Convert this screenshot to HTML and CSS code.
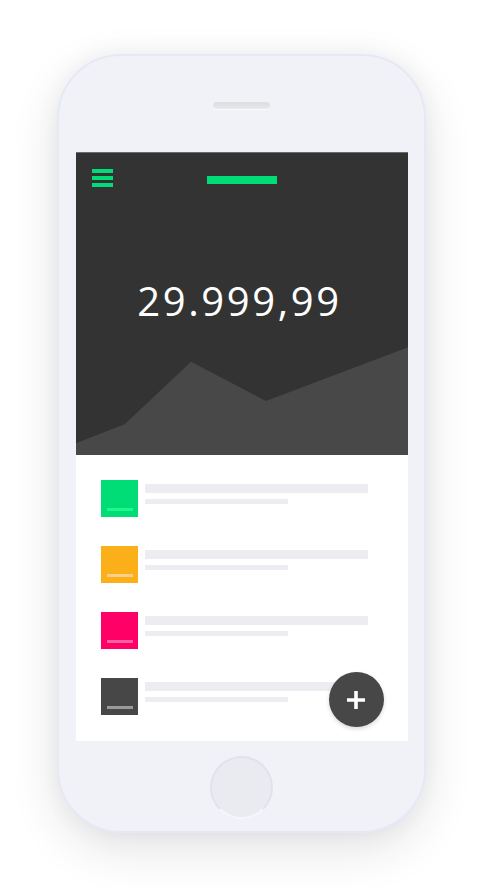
FILE: index.html
```html
<!DOCTYPE html>
<html lang="en">
<head>
<meta charset="utf-8">
<title>Wallet</title>
<link rel="stylesheet" href="styles.css">
</head>
<body>
<div class="phone">
  <div class="speaker"></div>
  <div class="screen">
    <header class="hero">
      <div class="topbar">
        <div class="menu"><span></span><span></span><span></span></div>
        <div class="title-bar"></div>
        <div></div>
      </div>
      <div class="amount">29.999,99</div>
      <svg class="chart" viewBox="0 0 332 108" width="332" height="108" preserveAspectRatio="none">
        <polygon points="0,96.3 49,77 115,14.7 190,54 332,0.3 332,108 0,108" fill="#484848"/>
      </svg>
    </header>
    <ul class="list">
      <li class="item"><div class="thumb green"><i></i></div><div class="lines"><div class="l1"></div><div class="l2"></div></div></li>
      <li class="item"><div class="thumb orange"><i></i></div><div class="lines"><div class="l1"></div><div class="l2"></div></div></li>
      <li class="item"><div class="thumb pink"><i></i></div><div class="lines"><div class="l1"></div><div class="l2"></div></div></li>
      <li class="item"><div class="thumb dark"><i></i></div><div class="lines"><div class="l1"></div><div class="l2"></div></div></li>
    </ul>
    <button class="fab" aria-label="Add">
      <svg width="20" height="20" viewBox="0 0 20 20"><path d="M10 1v18M1 10h18" stroke="#fff" stroke-width="3.6"/></svg>
    </button>
  </div>
  <div class="home"></div>
</div>
</body>
</html>
```

FILE: styles.css
```css
html, body {
  margin: 0;
  padding: 0;
  background: #ffffff;
}
body {
  width: 482px;
  height: 888px;
  overflow: hidden;
  padding-top: 54px;
  box-sizing: border-box;
  font-family: "Open Sans", Lato, sans-serif;
}
.phone {
  margin-left: 57px;
  width: 369px;
  height: 779px;
  box-sizing: border-box;
  border: 2px solid #e6e8f5;
  border-radius: 64px;
  background: #f1f2f8;
  box-shadow: 0 16px 48px rgba(30, 30, 50, 0.12), 0 0 24px rgba(30, 30, 50, 0.05);
  display: flex;
  flex-direction: column;
  align-items: center;
  padding-top: 46px;
}
.speaker {
  width: 57px;
  height: 8px;
  box-sizing: border-box;
  border-radius: 5px;
  background: linear-gradient(#dcdcdf, #e9e9ec);
  border-bottom: 1px solid #fafafc;
}
.screen {
  position: relative;
  margin-top: 42px;
  width: 332px;
  height: 589px;
  background: #ffffff;
  overflow: hidden;
}
.hero {
  height: 303px;
  box-sizing: border-box;
  background: #333333;
  border-top: 1px solid #6c6c70;
  padding-top: 16px;
  display: flex;
  flex-direction: column;
}
.topbar {
  display: grid;
  grid-template-columns: 1fr auto 1fr;
  height: 18px;
}
.menu {
  padding-left: 16px;
  display: flex;
  flex-direction: column;
  gap: 3px;
}
.menu span {
  display: block;
  width: 21px;
  height: 4px;
  background: #00dc76;
}
.title-bar {
  margin-top: 7px;
  width: 70px;
  height: 7.5px;
  background: #00dc76;
}
.amount {
  margin-top: 94px;
  text-align: center;
  color: #ffffff;
  font-size: 40px;
  line-height: 40px;
  letter-spacing: 2.6px;
  padding-right: 4px;
  font-weight: 400;
}
.chart {
  display: block;
  margin-top: auto;
}
.list {
  list-style: none;
  margin: 0;
  padding: 25px 0 0 25px;
  display: flex;
  flex-direction: column;
  gap: 29px;
}
.item {
  display: flex;
  align-items: flex-start;
  gap: 7px;
  height: 37px;
}
.thumb {
  width: 37px;
  height: 37px;
  position: relative;
  display: flex;
  align-items: flex-end;
  padding: 0 0 6px 6px;
  box-sizing: border-box;
}
.thumb i {
  display: block;
  width: 26px;
  height: 3.5px;
}
.green { background: #00dd76; }
.green i { background: #1ef58b; }
.orange { background: #fbaf18; }
.orange i { background: #fdd08a; }
.pink { background: #ff0066; }
.pink i { background: #ff5f9f; }
.dark { background: #474747; }
.dark i { background: #9a9a9a; }
.lines {
  padding-top: 4px;
}
.l1 {
  width: 223px;
  height: 9px;
  background: #ececf1;
}
.l2 {
  margin-top: 6px;
  width: 143px;
  height: 5px;
  background: #ececf1;
}
.fab {
  position: absolute;
  left: 253px;
  top: 520px;
  width: 55px;
  height: 55px;
  border-radius: 50%;
  border: none;
  padding: 0;
  background: #474747;
  box-shadow: 0 2px 4px rgba(0, 0, 0, 0.15);
  display: flex;
  align-items: center;
  justify-content: center;
}
.home {
  margin-top: 15px;
  width: 63px;
  height: 63px;
  box-sizing: border-box;
  border-radius: 50%;
  background: #eaebf1;
  border: 2px solid #e1e3ec;
  border-bottom-color: #f5f6fa;
}
```
